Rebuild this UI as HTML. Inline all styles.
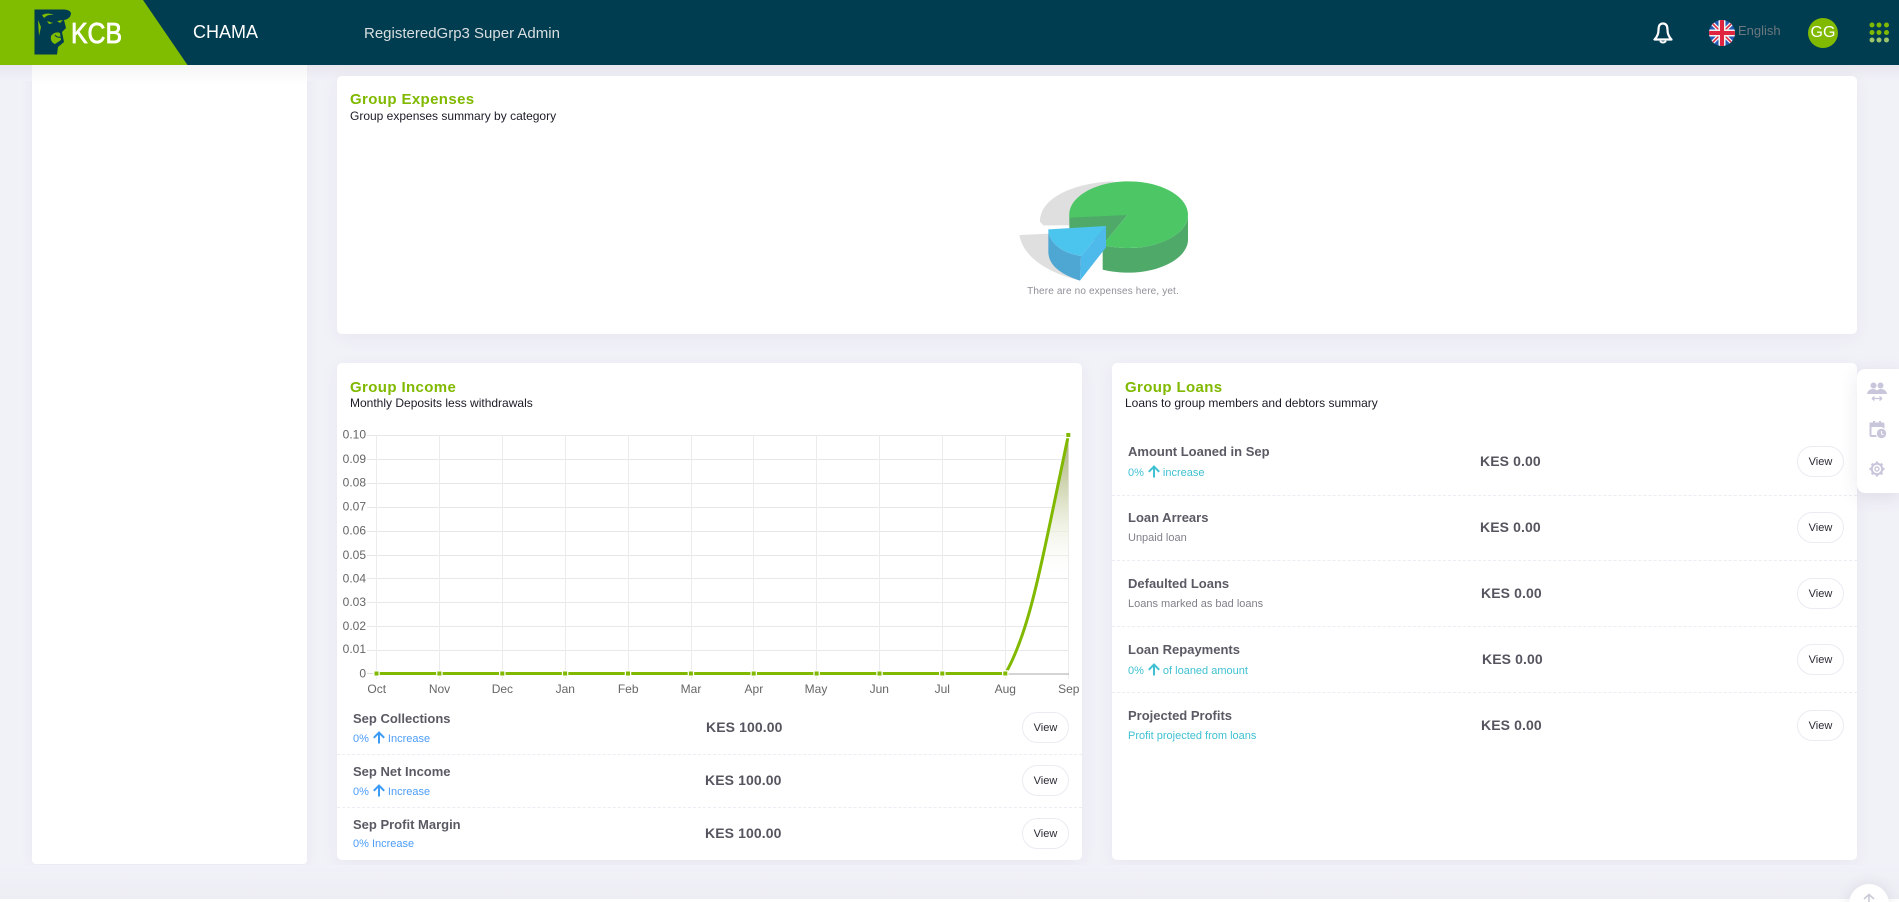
<!DOCTYPE html>
<html lang="en">
<head>
<meta charset="utf-8">
<title>KCB Chama</title>
<style>
html,body{margin:0;padding:0;width:1899px;height:902px;overflow:hidden;background:#f1f1f8;font-family:"Liberation Sans",Arial,sans-serif}
#w{position:relative;width:1899px;height:902px;overflow:hidden}
.a{position:absolute;white-space:nowrap}
.card{position:absolute;background:#fff;border-radius:5px;box-shadow:0 4px 18px rgba(82,63,105,.05)}
.title{position:absolute;color:#80b900;font-weight:bold;font-size:15px;letter-spacing:.38px;line-height:18px;white-space:nowrap}
.subt{position:absolute;color:#1c1c28;font-size:12px;line-height:16px;white-space:nowrap}
.rt{position:absolute;color:#5a5a64;font-size:13px;font-weight:bold;line-height:16px;white-space:nowrap}
.rs{position:absolute;font-size:11px;line-height:14px;white-space:nowrap}
.rs svg{display:inline-block;vertical-align:-2px;margin:0 3px 0 4px}
.blue{color:#4c9df8}.teal{color:#3fc1d2}.grey{color:#80808a}
.amt{position:absolute;color:#55555f;font-size:14px;font-weight:bold;letter-spacing:.1px;line-height:16px;white-space:nowrap}
.btn{position:absolute;width:45px;height:29px;border:1px solid #ebebf3;border-radius:16px;background:#fff;color:#2a2a35;font-size:11px;line-height:31px;text-align:center}
.dash{position:absolute;height:0;border-top:1px dashed #ebedf3}
</style>
</head>
<body>
<div id="w">
<!-- sidebar -->
<div class="a" style="left:32px;top:60px;width:275px;height:804px;background:#fff;border-radius:0 0 4px 4px;box-shadow:0 2px 14px rgba(82,63,105,.05)"></div>

<!-- top shade -->
<div class="a" style="left:0;top:65px;width:1899px;height:16px;background:linear-gradient(#e8e7ef,#f1f1f8)"></div>
<div class="a" style="left:32px;top:65px;width:275px;height:20px;background:linear-gradient(#f5f5f7,#fff)"></div>

<!-- header -->
<div class="a" style="left:0;top:0;width:1899px;height:65px;background:#003d50"></div>
<svg class="a" style="left:0;top:0" width="200" height="65" viewBox="0 0 200 65">
  <polygon points="0,0 143,0 187.5,65 0,65" fill="#80bc00"/>
  <path d="M34.5 9.5 L64 9.5 Q71 10 71 14 Q70 19 64 20 L66 28 L62 32 L64 42 L58 47 L57 54.5 L34.5 54.5 Z" fill="#003d50"/>
  <path d="M47 21 L53 23 L49 24 Z M57 21 L63 20 L60 23 Z M42 15 Q48 12 54 15 Q48 14 44 18 Z M51 36 Q55 31 60 33 L61 40 L55 44 Q50 42 51 36 Z M38 20 L41 27 L39 36 Z" fill="#80bc00"/>
  <path d="M55 35 Q57 38 61 37" fill="none" stroke="#003d50" stroke-width="1"/>
  <text x="71" y="43" font-family="Liberation Sans" font-size="29" fill="#fff" stroke="#fff" stroke-width=".8" textLength="51" lengthAdjust="spacingAndGlyphs">KCB</text>
</svg>
<div class="a" style="left:193px;top:22px;color:#fff;font-size:18px;line-height:21px">CHAMA</div>
<div class="a" style="left:364px;top:24px;color:#d9dfe1;font-size:15px;line-height:19px">RegisteredGrp3 Super Admin</div>

<!-- bell -->
<svg class="a" style="left:1653px;top:21px" width="20" height="24" viewBox="0 0 20 24">
  <path d="M10 2.5 C6 2.5 5.5 6 5.5 9 C5.5 13 4 16 1.5 18.5 H18.5 C16 16 14.5 13 14.5 9 C14.5 6 14 2.5 10 2.5 Z" fill="none" stroke="#fff" stroke-width="2.2" stroke-linejoin="round"/>
  <path d="M7.5 20.5 Q10 22.5 12.5 20.5" fill="none" stroke="#fff" stroke-width="2" stroke-linecap="round"/>
</svg>
<!-- flag -->
<svg class="a" style="left:1709px;top:20px" width="26" height="26" viewBox="0 0 26 26">
  <defs><clipPath id="fc"><circle cx="13" cy="13" r="13"/></clipPath></defs>
  <g clip-path="url(#fc)">
    <rect width="26" height="26" fill="#2659b5"/>
    <path d="M0 0 L26 26 M26 0 L0 26" stroke="#f2f2f2" stroke-width="4"/>
    <path d="M0 0 L26 26 M26 0 L0 26" stroke="#e0233f" stroke-width="1.5"/>
    <path d="M13 0 V26 M0 13 H26" stroke="#f2f2f2" stroke-width="7"/>
    <path d="M13 0 V26 M0 13 H26" stroke="#e0233f" stroke-width="4"/>
  </g>
</svg>
<div class="a" style="left:1738px;top:23px;color:#6b777e;font-size:13px;line-height:16px">English</div>
<div class="a" style="left:1808px;top:18px;width:30px;height:30px;border-radius:50%;background:#80b900;color:#fff;font-size:16px;line-height:30px;text-align:center">GG</div>
<svg class="a" style="left:1866px;top:20px" width="26" height="26" viewBox="0 0 26 26">
  <g fill="#80b900"><circle cx="6" cy="5" r="2.5"/><circle cx="13" cy="5" r="2.5"/><circle cx="20.5" cy="5" r="2.5"/><circle cx="6" cy="12.5" r="2.5"/><circle cx="13" cy="12.5" r="2.5"/><circle cx="20.5" cy="12.5" r="2.5"/></g>
  <g fill="#9cc56a"><circle cx="6" cy="20" r="2.5"/><circle cx="13" cy="20" r="2.5"/><circle cx="20.5" cy="20" r="2.5"/></g>
</svg>

<!-- Expenses card -->
<div class="card" style="left:337px;top:76px;width:1520px;height:258px"></div>
<div class="title" style="left:350px;top:91px">Group Expenses</div>
<div class="subt" style="left:350px;top:108px">Group expenses summary by category</div>
<svg class="a" style="left:980px;top:160px" width="260" height="150" viewBox="0 0 780 450">
  <path d="M400 64 C280 68 178 115 180 185 L190 196 L290 196 L420 120 Z" fill="#dfdfdf"/>
  <path d="M118 225 L210 221 L300 362 C210 340 130 295 118 225 Z" fill="#dfdfdf"/>
  <path d="M268 165 V240 H368 V255 L442 165 Z" fill="#4faa69"/>
  <path d="M624 165 C624 220 540 264 446 264 C420 264 392 261 368 255 V329 C392 335 420 338 446 338 C540 338 624 294 624 239 Z" fill="#4faa69"/>
  <path d="M268 173 L442 165 L368 255 C392 261 420 264 446 264 C544 264 624 219 624 164 C624 109 544 64 446 64 C348 64 268 109 268 164 Z" fill="#4dc766"/>
  <path d="M205 208 C205 250 250 280 303 288 L300 362 C250 345 205 320 205 275 Z" fill="#4ea6d3"/>
  <path d="M303 288 L378 198 V262 L300 362 Z" fill="#4eb9eb"/>
  <path d="M205 208 L378 198 L303 288 C250 280 205 250 205 208 Z" fill="#4bc4ee"/>
</svg>
<div class="a" style="left:1027px;top:285px;width:152px;text-align:center;color:#8f8f98;font-size:10px;letter-spacing:.14px;line-height:13px">There are no expenses here, yet.</div>

<!-- Income card -->
<div class="card" style="left:337px;top:363px;width:745px;height:497px"></div>
<div class="title" style="left:350px;top:379px">Group Income</div>
<div class="subt" style="left:350px;top:395px">Monthly Deposits less withdrawals</div>

<svg class="a" style="left:337px;top:420px" width="745" height="285" viewBox="337 420 745 285" font-family="Liberation Sans" font-size="12" fill="#666">
  <defs><linearGradient id="ar" x1="0" y1="435" x2="0" y2="580" gradientUnits="userSpaceOnUse"><stop offset="0" stop-color="#a9b078"/><stop offset=".5" stop-color="#e3e7cf"/><stop offset="1" stop-color="#fff" stop-opacity="0"/></linearGradient></defs>
  <g stroke="#e8e8e8" stroke-width="1">
    <path d="M367 435.5H1069M367 459.5H1069M367 483.5H1069M367 507.5H1069M367 531.5H1069M367 555.5H1069M367 578.5H1069M367 602.5H1069M367 626.5H1069M367 650.5H1069"/>
    <path stroke="#ececec" d="M376.5 435V679M439.5 435V679M502.5 435V679M565.5 435V679M628.5 435V679M691.5 435V679M753.5 435V679M816.5 435V679M879.5 435V679M942.5 435V679M1005.5 435V679M1068.5 435V679"/>
  </g>
  <path d="M1005.5 674H1069" stroke="#aaa" stroke-width="1"/>
  <path d="M367 673.5H376" stroke="#ddd" stroke-width="1"/>
  <path d="M1005.5 674 C1030 630 1040 570 1068.4 435 V674 Z" fill="url(#ar)"/>
  <path d="M376.5 673.5H1005.5 C1030 630 1040 570 1068.4 435" fill="none" stroke="#80b900" stroke-width="3"/>
  <g fill="#80b900" stroke="#fff" stroke-width="2.5" paint-order="stroke">
    <rect x="374.5" y="671.5" width="4" height="4"/><rect x="437.4" y="671.5" width="4" height="4"/><rect x="500.3" y="671.5" width="4" height="4"/><rect x="563.1" y="671.5" width="4" height="4"/><rect x="626" y="671.5" width="4" height="4"/><rect x="688.9" y="671.5" width="4" height="4"/><rect x="751.7" y="671.5" width="4" height="4"/><rect x="814.6" y="671.5" width="4" height="4"/><rect x="877.5" y="671.5" width="4" height="4"/><rect x="940.3" y="671.5" width="4" height="4"/><rect x="1003.3" y="671.5" width="4" height="4"/><rect x="1066.3" y="433" width="4" height="4"/>
  </g>
  <g text-anchor="end">
    <text x="366" y="438.5">0.10</text><text x="366" y="463">0.09</text><text x="366" y="486.5">0.08</text><text x="366" y="510.5">0.07</text><text x="366" y="534.5">0.06</text><text x="366" y="559">0.05</text><text x="366" y="582.5">0.04</text><text x="366" y="606">0.03</text><text x="366" y="630">0.02</text><text x="366" y="653">0.01</text><text x="366" y="677.5">0</text>
  </g>
  <g text-anchor="middle">
    <text x="376.7" y="693">Oct</text><text x="439.5" y="693">Nov</text><text x="502.4" y="693">Dec</text><text x="565.3" y="693">Jan</text><text x="628.2" y="693">Feb</text><text x="691" y="693">Mar</text><text x="753.9" y="693">Apr</text><text x="816" y="693">May</text><text x="879.3" y="693">Jun</text><text x="942.3" y="693">Jul</text><text x="1005.3" y="693">Aug</text><text x="1068.8" y="693">Sep</text>
  </g>
</svg>

<div class="rt" style="left:353px;top:711px">Sep Collections</div>
<div class="rs blue" style="left:353px;top:731px">0%<svg width="12" height="13" viewBox="0 0 12 13"><path d="M6 12.5V1.5M.8 6.8L6 1.5L11.2 6.8" fill="none" stroke="#3b9bf5" stroke-width="2"/></svg>Increase</div>
<div class="amt" style="left:706px;top:719px">KES 100.00</div>
<div class="btn" style="left:1022px;top:712px">View</div>
<div class="dash" style="left:337px;top:754px;width:745px"></div>

<div class="rt" style="left:353px;top:764px">Sep Net Income</div>
<div class="rs blue" style="left:353px;top:784px">0%<svg width="12" height="13" viewBox="0 0 12 13"><path d="M6 12.5V1.5M.8 6.8L6 1.5L11.2 6.8" fill="none" stroke="#3b9bf5" stroke-width="2"/></svg>Increase</div>
<div class="amt" style="left:705px;top:772px">KES 100.00</div>
<div class="btn" style="left:1022px;top:765px">View</div>
<div class="dash" style="left:337px;top:807px;width:745px"></div>

<div class="rt" style="left:353px;top:817px">Sep Profit Margin</div>
<div class="rs blue" style="left:353px;top:837px">0% Increase</div>
<div class="amt" style="left:705px;top:825px">KES 100.00</div>
<div class="btn" style="left:1022px;top:818px">View</div>

<!-- Loans card -->
<div class="card" style="left:1112px;top:363px;width:745px;height:497px"></div>
<div class="title" style="left:1125px;top:379px">Group Loans</div>
<div class="subt" style="left:1125px;top:395px">Loans to group members and debtors summary</div>

<div class="rt" style="left:1128px;top:444px">Amount Loaned in Sep</div>
<div class="rs teal" style="left:1128px;top:465px">0%<svg width="12" height="13" viewBox="0 0 12 13"><path d="M6 12.5V1.5M.8 6.8L6 1.5L11.2 6.8" fill="none" stroke="#3fc1d2" stroke-width="2"/></svg>increase</div>
<div class="amt" style="left:1480px;top:453px">KES 0.00</div>
<div class="btn" style="left:1797px;top:446px">View</div>
<div class="dash" style="left:1112px;top:495px;width:745px"></div>

<div class="rt" style="left:1128px;top:510px">Loan Arrears</div>
<div class="rs grey" style="left:1128px;top:531px">Unpaid loan</div>
<div class="amt" style="left:1480px;top:519px">KES 0.00</div>
<div class="btn" style="left:1797px;top:512px">View</div>
<div class="dash" style="left:1112px;top:560px;width:745px"></div>

<div class="rt" style="left:1128px;top:576px">Defaulted Loans</div>
<div class="rs grey" style="left:1128px;top:597px">Loans marked as bad loans</div>
<div class="amt" style="left:1481px;top:585px">KES 0.00</div>
<div class="btn" style="left:1797px;top:578px">View</div>
<div class="dash" style="left:1112px;top:626px;width:745px"></div>

<div class="rt" style="left:1128px;top:642px">Loan Repayments</div>
<div class="rs teal" style="left:1128px;top:663px">0%<svg width="12" height="13" viewBox="0 0 12 13"><path d="M6 12.5V1.5M.8 6.8L6 1.5L11.2 6.8" fill="none" stroke="#3fc1d2" stroke-width="2"/></svg>of loaned amount</div>
<div class="amt" style="left:1482px;top:651px">KES 0.00</div>
<div class="btn" style="left:1797px;top:644px">View</div>
<div class="dash" style="left:1112px;top:692px;width:745px"></div>

<div class="rt" style="left:1128px;top:708px">Projected Profits</div>
<div class="rs teal" style="left:1128px;top:729px">Profit projected from loans</div>
<div class="amt" style="left:1481px;top:717px">KES 0.00</div>
<div class="btn" style="left:1797px;top:710px">View</div>

<!-- right widget -->
<div class="a" style="left:1857px;top:369px;width:42px;height:124px;background:#fff;border-radius:8px 0 0 8px;box-shadow:0 4px 18px rgba(82,63,105,.12)"></div>
<svg class="a" style="left:1867px;top:382px" width="20" height="20" viewBox="0 0 20 20" fill="#c8c6da">
  <circle cx="6.5" cy="3.5" r="3"/><circle cx="13.5" cy="3.5" r="3"/>
  <path d="M0 12 Q1 7 6 7 Q8.5 7 10 8.5 Q11.5 7 14 7 Q19 7 20 12 Z"/>
  <path d="M5 16.5H15M5 16.5L7.5 14.5M5 16.5L7.5 18.5M15 16.5L12.5 14.5M15 16.5L12.5 18.5" stroke="#c8c6da" stroke-width="1.3" fill="none"/>
</svg>
<svg class="a" style="left:1869px;top:421px" width="18" height="18" viewBox="0 0 18 18">
  <path d="M1.5 2.5H13.5Q14.5 2.5 14.5 3.5V15H2.5Q1.5 15 1.5 14Z" fill="none" stroke="#c8c6da" stroke-width="2"/>
  <path d="M1 1.8H15V6H1Z M4 0H6V3H4Z M10 0H12V3H10Z" fill="#c8c6da"/>
  <circle cx="12.5" cy="12.5" r="5.2" fill="#c8c6da" stroke="#fff" stroke-width="1"/>
  <path d="M12.5 10V12.8L14.5 13.8" fill="none" stroke="#fff" stroke-width="1"/>
</svg>
<svg class="a" style="left:1869px;top:461px" width="16" height="16" viewBox="0 0 16 16">
  <circle cx="8" cy="8" r="5.2" fill="none" stroke="#c8c6da" stroke-width="2"/>
  <circle cx="8" cy="8" r="2" fill="none" stroke="#c8c6da" stroke-width="1.4"/>
  <path d="M8 0.5V3M8 13V15.5M0.5 8H3M13 8H15.5M2.7 2.7L4.5 4.5M11.5 11.5L13.3 13.3M13.3 2.7L11.5 4.5M4.5 11.5L2.7 13.3" stroke="#c8c6da" stroke-width="2.4"/>
</svg>

<!-- footer -->
<div class="a" style="left:0;top:865px;width:1899px;height:34px;background:linear-gradient(#f1f1f8,#edeef4)"></div>
<div class="a" style="left:0;top:899px;width:1899px;height:3px;background:#fff"></div>
<div class="a" style="left:1849px;top:884px;width:40px;height:40px;border-radius:50%;background:#fff;box-shadow:0 0 14px rgba(82,63,105,.12)"></div>
<svg class="a" style="left:1862px;top:893px" width="14" height="9" viewBox="0 0 14 9"><path d="M7 9V1.5M2 6L7 1.5L12 6" fill="none" stroke="#c9cbd6" stroke-width="1.6"/></svg>
</div>
</body>
</html>
